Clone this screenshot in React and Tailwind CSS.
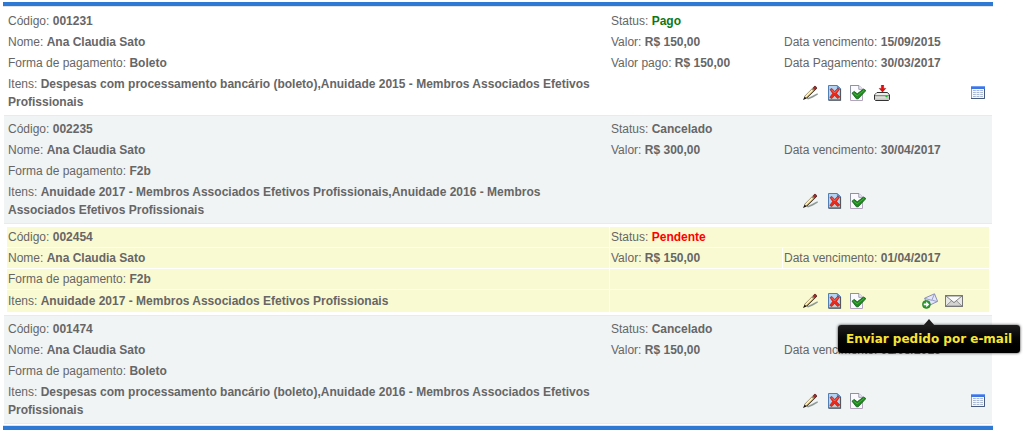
import React from "react";

function PencilIcon() {
  return (
    <svg viewBox="0 0 16 16" className="h-4 w-4" aria-hidden="true">
      <path d="M4.5 13.6 L9 11.6 L15.4 8.2 L16 9.4 L11 12.6 L6 14.6Z" fill="#8f9a94" />
      <path d="M1 15 L2.6 11.4 L4.6 13.4Z" fill="#1a140c" />
      <path d="M3.6 12.4 L14 2" stroke="#2a1c10" strokeWidth="3.4" />
      <path d="M3.6 12 L12 3.6" stroke="#fbe7a6" strokeWidth="2.2" />
      <path d="M3.2 11.6 L11.5 3.3" stroke="#fffbe8" strokeWidth="0.9" />
      <path d="M11.6 4.3 L14.2 1.7" stroke="#a5282a" strokeWidth="2.6" />
      <path d="M10.6 5.2 L11.8 4" stroke="#7f8a8c" strokeWidth="2.2" />
    </svg>
  );
}

function CancelIcon() {
  return (
    <svg viewBox="0 0 16 16" className="h-4 w-4" aria-hidden="true">
      <path d="M2.5 0.5H11L14.5 3.5V15H2.5Z" fill="#b4d3f3" stroke="#4f7fb4" />
      <path d="M3 10H14V14.5H3Z" fill="#c6c9cc" />
      <path d="M11.3 0.8V3.8H14.3Z" fill="#4a8ee0" stroke="#4f7fb4" strokeWidth="0.6" />
      <path d="M2.5 15.2H14.5V4" fill="none" stroke="#55595e" strokeWidth="1.2" />
      <path d="M4 4.5 5.8 3.4 8.6 6.4 11.8 3.2 13.4 4.4 10.6 8.4 13.8 12 11.6 13.6 8.6 10.4 5.8 13.6 3.8 12.4 6.6 8.4Z" fill="#e8291c" stroke="#a8170f" strokeWidth="0.6" />
      <path d="M5.4 4.7 8.6 8 12 4.4" fill="none" stroke="#ff7a66" strokeWidth="0.8" />
    </svg>
  );
}

function CheckIcon() {
  return (
    <svg viewBox="0 0 16 16" className="h-4 w-4" aria-hidden="true">
      <path d="M0.5 0.5H9L12.5 4V15.5H0.5Z" fill="#fbfaff" stroke="#b3a4bd" />
      <path d="M0.5 8V0.5H9" fill="none" stroke="#8d93a0" />
      <path d="M8.8 0.8V4.3H12.3" fill="#eef0f8" stroke="#8d93a0" strokeWidth="0.9" />
      <path d="M2 8.2 4.2 6.4 7.2 8.8 13.6 4 15.9 5.6 8.2 13.8 6.4 13.8Z" fill="#1f8a1e" stroke="#0d5914" strokeWidth="0.8" />
      <path d="M3.4 8 7.2 10.8 14.2 5.3" fill="none" stroke="#4fb045" strokeWidth="0.9" />
    </svg>
  );
}

function DownloadIcon() {
  return (
    <svg viewBox="0 0 16 16" className="h-4 w-4" aria-hidden="true">
      <path d="M3 7.5H13.5L15.5 10V14.5L14.5 15.5H1.5L0.5 14.5V10Z" fill="#c9cac6" stroke="#333333" />
      <path d="M3 8H13L15 10H1Z" fill="#eeeeeb" />
      <path d="M1 10.5H15" stroke="#8e8e8e" />
      <path d="M1.5 12H12V13.5H1.5Z" fill="#dededb" />
      <path d="M11.5 11.5H13.5" stroke="#19bd28" strokeWidth="1.2" />
      <path d="M7.4 0H9.6V3.4H11.8L8.5 7 5.2 3.4H7.4Z" fill="#e80b0b" stroke="#8f0808" strokeWidth="0.5" />
    </svg>
  );
}

function TableIcon() {
  return (
    <svg viewBox="0 0 16 16" className="h-4 w-4" aria-hidden="true">
      <path d="M1 1H15V14H1Z" fill="#7f9bd0" />
      <path d="M2 4H14V13H2Z" fill="#f4f8ff" />
      <path d="M1 1H15V4H1Z" fill="#3f76e4" />
      <path d="M1 1.5H15" stroke="#6f9cf4" />
      <path d="M3 5.5H13M3 7.5H13M3 9.5H13M3 11.5H13" stroke="#a9b8d4" strokeDasharray="2.8 .8" />
      <path d="M1 13.5H14.5V4" fill="none" stroke="#48597e" />
    </svg>
  );
}

function SendIcon() {
  return (
    <svg viewBox="0 0 16 16" className="h-4 w-4" aria-hidden="true">
      <path d="M2.6 5.2 12.5 0.8 15.6 8.4 6 13Z" fill="#e3e6fb" stroke="#8085ae" strokeWidth="0.9" />
      <path d="M2.8 5.4 9.8 7.3 12.4 1M10.2 7.2 15.3 8.6" fill="none" stroke="#888eb8" strokeWidth="0.8" />
      <circle cx="4.4" cy="11.4" r="4" fill="#2f9e32" stroke="#167219" strokeWidth="0.6" />
      <path d="M1.8 10.5H4.2V8.6L7.2 11.4 4.2 14.2V12.3H1.8Z" fill="#ffffff" />
    </svg>
  );
}

function EnvelopeIcon() {
  return (
    <svg viewBox="0 0 18 12" className="h-3 w-[18px] shrink-0" aria-hidden="true">
      <path d="M0.5 0.5H17.5V11.5H0.5Z" fill="#e9e9e7" stroke="#777777" />
      <path d="M1 11 6.8 5.5 9 7.2 11.2 5.5 17 11Z" fill="#d3d3d1" stroke="#8c8c8c" strokeWidth="0.9" />
      <path d="M1 1 9 7.6 17 1Z" fill="#fafafa" stroke="#777777" strokeWidth="0.9" />
      <path d="M0.5 0.5H17.5V11.5H0.5Z" fill="none" stroke="#777777" />
    </svg>
  );
}

const ACTIONS = {
  edit: { label: "Editar", slot: "col-start-1", Icon: PencilIcon },
  cancel: { label: "Cancelar", slot: "col-start-2", Icon: CancelIcon },
  confirm: { label: "Confirmar", slot: "col-start-3", Icon: CheckIcon },
  download: { label: "Baixar", slot: "col-start-4", Icon: DownloadIcon },
  send: { label: "Enviar pedido por e-mail", slot: "col-start-6", Icon: SendIcon, tip: true },
  mail: { label: "E-mail", slot: "col-start-7", Icon: EnvelopeIcon },
  details: { label: "Detalhes", slot: "col-start-8", Icon: TableIcon },
};

const ORDERS = [
  {
    code: "001231", method: "Boleto", status: "Pago", statusClass: "text-[#107810]",
    value: "R$ 150,00", due: "15/09/2015", paid: "R$ 150,00", paidOn: "30/03/2017",
    items: "Despesas com processamento bancário (boleto),Anuidade 2015 - Membros Associados Efetivos Profissionais",
    actions: ["edit", "cancel", "confirm", "download", "details"],
    rowClass: "bg-white", cellClass: "",
  },
  {
    code: "002235", method: "F2b", status: "Cancelado", statusClass: "",
    value: "R$ 300,00", due: "30/04/2017",
    items: "Anuidade 2017 - Membros Associados Efetivos Profissionais,Anuidade 2016 - Membros Associados Efetivos Profissionais",
    actions: ["edit", "cancel", "confirm"],
    rowClass: "bg-[#f0f4f5]", cellClass: "",
  },
  {
    code: "002454", method: "F2b", status: "Pendente", statusClass: "text-[#ff0000]",
    value: "R$ 150,00", due: "01/04/2017",
    items: "Anuidade 2017 - Membros Associados Efetivos Profissionais",
    actions: ["edit", "cancel", "confirm", "send", "mail"],
    rowClass: "bg-white", cellClass: "bg-[#fafad2]",
  },
  {
    code: "001474", method: "Boleto", status: "Cancelado", statusClass: "",
    value: "R$ 150,00", due: "01/05/2016",
    items: "Despesas com processamento bancário (boleto),Anuidade 2016 - Membros Associados Efetivos Profissionais",
    actions: ["edit", "cancel", "confirm", "details"],
    rowClass: "bg-[#f0f4f5]", cellClass: "",
  },
];

function Field({ label, children, className = "" }) {
  return (
    <>
      {label}: <b className={className}>{children}</b>
    </>
  );
}

function Tooltip({ children }) {
  return (
    <span role="tooltip" className="absolute top-8 left-1/2 z-10 -ml-[92px] rounded-[3px] bg-linear-to-b from-[#1e1e1e] to-black px-2 py-[5px] font-['DejaVu_Sans',Verdana,sans-serif] text-[12px] leading-[18px] font-bold whitespace-nowrap text-[#f9e533] shadow-[0_0_3px_rgba(0,0,0,0.8)]">
      <svg viewBox="0 0 12 7" className="absolute -top-[6px] left-[85px] h-[7px] w-3" aria-hidden="true">
        <path d="M0 7 6 0 12 7Z" fill="#1e1e1e" />
      </svg>
      {children}
    </span>
  );
}

function Action({ name }) {
  const { label, slot, Icon, tip } = ACTIONS[name];
  return (
    <div className={`relative row-start-1 flex h-4 w-4 items-center justify-center ${slot}`}>
      <button type="button" aria-label={label} className="flex h-4 w-4 cursor-pointer items-center justify-center">
        <Icon />
      </button>
      {tip && <Tooltip>{label}</Tooltip>}
    </div>
  );
}

function Order({ order }) {
  const cell = `p-px align-middle ${order.cellClass}`;
  return (
    <article className={`border-b border-[#e8eaeb] p-[2px] ${order.rowClass}`}>
      <table className="w-full table-fixed border-separate border-spacing-px">
        <colgroup>
          <col />
          <col className="w-[172px]" />
          <col className="w-[206px]" />
        </colgroup>
        <tbody>
          <tr>
            <td className={cell}><Field label="Código">{order.code}</Field></td>
            <td className={cell} colSpan={2}><Field label="Status" className={order.statusClass}>{order.status}</Field></td>
          </tr>
          <tr>
            <td className={cell}><Field label="Nome">Ana Claudia Sato</Field></td>
            <td className={cell}><Field label="Valor">{order.value}</Field></td>
            <td className={cell}><Field label="Data vencimento">{order.due}</Field></td>
          </tr>
          <tr>
            <td className={cell}><Field label="Forma de pagamento">{order.method}</Field></td>
            {order.paid ? (
              <>
                <td className={cell}><Field label="Valor pago">{order.paid}</Field></td>
                <td className={cell}><Field label="Data Pagamento">{order.paidOn}</Field></td>
              </>
            ) : (
              <td className={cell} colSpan={2} />
            )}
          </tr>
          <tr className="h-[22px]">
            <td className={cell}><Field label="Itens">{order.items}</Field></td>
            <td className={cell} colSpan={2}>
              <div className="grid grid-cols-[repeat(8,16px)] justify-end gap-2 pr-[2px]">
                {order.actions.map((name) => <Action key={name} name={name} />)}
              </div>
            </td>
          </tr>
        </tbody>
      </table>
    </article>
  );
}

export default function App() {
  return (
    <main className="bg-white pt-[2px] pr-[30px] pl-[3px] font-['Liberation_Sans',Arial,sans-serif] text-[12px] leading-[18px] text-[#666666]">
      <section className="border-y-4 border-[#2d79d3]">
        <div className="border-y border-[#e0e3e5] px-px py-px">
          {ORDERS.map((order) => <Order key={order.code} order={order} />)}
        </div>
      </section>
    </main>
  );
}
